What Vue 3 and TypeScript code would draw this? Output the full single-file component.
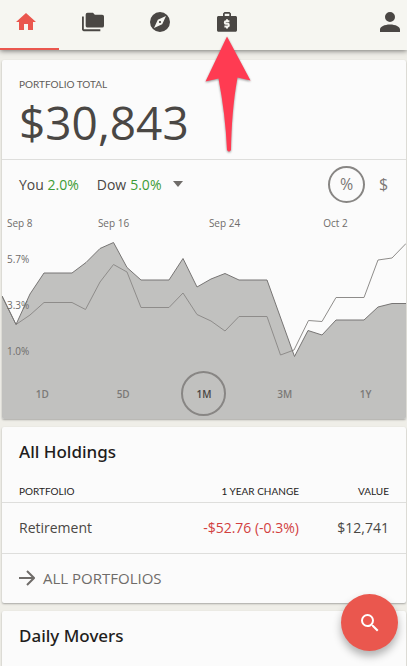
<script setup lang="ts">
import { computed, ref } from 'vue'

type Point = [number, number]

const unit = ref<'percent' | 'dollar'>('percent')
const periods = ['1D', '5D', '1M', '3M', '1Y']
const period = ref('1M')
const dates = ['Sep 8', 'Sep 16', 'Sep 24', 'Oct 2']
const levels = ['5.7%', '3.3%', '1.0%']

const holdings = [{ name: 'Retirement', change: '-$52.76 (-0.3%)', value: '$12,741' }]

const mine: Point[] = [
  [0, 88], [14, 116.5], [28, 86], [42, 65], [70, 65], [84, 54.5], [98, 40.5], [111.5, 34.5],
  [125, 59.5], [139, 72], [167, 72], [181, 50.5], [195, 79], [209, 71], [223, 65.5], [237, 72],
  [265, 72], [292.5, 148.5], [306, 122.5], [320, 127], [334, 112], [362, 112], [376, 99],
  [390, 95.5], [404, 95.5],
]
const dow: Point[] = [
  [0, 88], [14, 116.5], [28, 107], [42, 94.5], [70, 94.5], [83.5, 101.5], [98, 74], [111.5, 56.5],
  [125, 64], [139, 99.5], [167, 99.5], [181, 85], [195, 106.5], [209, 113], [223, 123], [237, 108.5],
  [265, 108.5], [278.5, 147], [292, 142], [306.5, 112.5], [320, 113.5], [334, 89.5], [362, 89.5],
  [376, 52], [390, 50], [404, 35.5],
]

const toPath = (points: Point[]) => 'M' + points.map(([x, y]) => `${x} ${y}`).join('L')
const minePath = computed(() => toPath(mine))
const dowPath = computed(() => toPath(dow))
const areaPath = computed(() => `${minePath.value}V211H0Z`)
</script>

<template>
  <div class="page">
    <header class="bar">
      <nav class="tabs" aria-label="Main">
        <a class="tab active" href="#home" aria-label="Home">
          <svg width="24" height="24" viewBox="0 0 24 24"><path d="M10 20v-6h4v6h5v-8h3L12 3 2 12h3v8z" /></svg>
        </a>
        <a class="tab" href="#portfolios" aria-label="Portfolios">
          <svg width="22" height="22" viewBox="0 0 24 24"><path d="M22 4h-8l-2-2H6a2 2 0 0 0-2 2v12c0 1.100.9 2 2 2h16a2 2 0 0 0 2-2V6a2 2 0 0 0-2-2M2 6H0v14c0 1.100.9 2 2 2h18v-2H2z" /></svg>
        </a>
        <a class="tab" href="#explore" aria-label="Explore">
          <svg width="24" height="24" viewBox="0 0 24 24"><path d="M12 10.900c-.61 0-1.100.49-1.100 1.100s.49 1.100 1.100 1.100 1.100-.49 1.100-1.100-.49-1.100-1.100-1.100zM12 2a10 10 0 1 0 0 20 10 10 0 0 0 0-20zm2.190 12.190L6 18l3.810-8.190L18 6z" /></svg>
        </a>
        <a class="tab" href="#funds" aria-label="Funds">
          <svg width="24" height="24" viewBox="0 0 24 24">
            <path fill-rule="evenodd" d="M8 6V3.500L9.500 2h5L16 3.500V6h4.500c.8 0 1.500.7 1.500 1.500v12.800c0 .8-.7 1.500-1.500 1.500h-17c-.8 0-1.500-.7-1.500-1.500V7.500C2 6.700 2.700 6 3.500 6zm1.700 0h4.600V3.700H9.700z" />
            <path class="mark" d="M14.400 11.300H10.800c-1.300 0-1.300 2.500 0 2.500h1.900c1.500 0 1.500 2.700 0 2.700H9.400M12 9.300v2M12 16.500v2" />
          </svg>
        </a>
      </nav>
      <a class="account" href="#account" aria-label="Account">
        <svg width="30" height="30" viewBox="0 0 24 24"><path d="M12 4a4 4 0 1 1 0 8 4 4 0 0 1 0-8m0 10c4.420 0 8 1.790 8 4v2H4v-2c0-2.210 3.580-4 8-4z" /></svg>
      </a>
    </header>

    <svg class="pointer" width="52" height="122" viewBox="0 0 52 122" aria-hidden="true">
      <path d="M25 2.500L48.500 46.500 35.500 43.500C31 68 29.500 92 29 116Q27 119 25 116C24 92 21 68 16.500 44.500L3.500 47.500Z" />
    </svg>

    <main class="cards">
      <section class="card">
        <div class="total">
          <h2 class="caption">PORTFOLIO TOTAL</h2>
          <p class="amount">$30,843</p>
        </div>
        <div class="compare">
          <span>You <b>2.0%</b></span>
          <button class="versus" type="button">
            Dow <b>5.0%</b>
            <svg width="10" height="6" viewBox="0 0 10 6"><path d="M0 0h10L5 6z" /></svg>
          </button>
          <div class="units">
            <button type="button" :class="['unit', { on: unit === 'percent' }]" @click="unit = 'percent'">%</button>
            <button type="button" :class="['unit', { on: unit === 'dollar' }]" @click="unit = 'dollar'">$</button>
          </div>
        </div>
        <div class="chart">
          <svg class="plot" viewBox="0 0 404 211" preserveAspectRatio="none" aria-hidden="true">
            <path class="area" :d="areaPath" />
            <path class="line dow" :d="dowPath" />
            <path class="line" :d="minePath" />
          </svg>
          <div class="dates"><span v-for="d in dates" :key="d">{{ d }}</span></div>
          <div class="levels"><span v-for="l in levels" :key="l">{{ l }}</span></div>
          <div class="periods">
            <button
              v-for="p in periods"
              :key="p"
              type="button"
              :class="['period', { on: p === period }]"
              @click="period = p"
            >{{ p }}</button>
          </div>
        </div>
      </section>

      <section class="card">
        <h2 class="title">All Holdings</h2>
        <table>
          <thead>
            <tr><th>PORTFOLIO</th><th>1 YEAR CHANGE</th><th>VALUE</th></tr>
          </thead>
          <tbody>
            <tr v-for="h in holdings" :key="h.name">
              <td>{{ h.name }}</td><td class="loss">{{ h.change }}</td><td>{{ h.value }}</td>
            </tr>
          </tbody>
        </table>
        <a class="more" href="#all">
          <svg width="16" height="16" viewBox="0 0 16 16"><path d="M0 8h15M8 1l7 7-7 7" /></svg>
          ALL PORTFOLIOS
        </a>
      </section>

      <section class="card last">
        <h2 class="title">Daily Movers</h2>
      </section>
    </main>

    <button class="search" type="button" aria-label="Search">
      <svg width="24" height="24" viewBox="0 0 24 24"><path d="M15.500 14h-.79l-.28-.27A6.470 6.470 0 0 0 16 9.500 6.500 6.500 0 1 0 9.500 16c1.610 0 3.090-.59 4.230-1.570l.27.28v.79l5 4.990L20.490 19zm-6 0a4.500 4.500 0 1 1 0-9 4.500 4.500 0 0 1 0 9z" /></svg>
    </button>
  </div>
</template>

<style>
body {
  background: #efeee8;
}
</style>

<style scoped>
.page {
  position: relative;
  display: flex;
  flex-direction: column;
  min-height: 100vh;
  font-family: "Open Sans", "Noto Sans", sans-serif;
  color: #4a4744;
}
.page * {
  box-sizing: border-box;
}
h2, p {
  margin: 0;
  font-weight: 400;
}
button {
  padding: 0;
  border: 0;
  background: none;
  font: inherit;
  color: inherit;
  cursor: pointer;
}
a {
  color: inherit;
  text-decoration: none;
}
svg {
  display: block;
  flex: none;
  fill: currentColor;
}
.bar {
  display: flex;
  justify-content: space-between;
  height: 50px;
  background: #f6f6f1;
  box-shadow: 0 1px 5px rgba(0, 0, 0, 0.5);
}
.tabs {
  display: flex;
  margin-left: -8px;
}
.tab {
  display: flex;
  align-items: center;
  justify-content: center;
  width: 67px;
  padding-bottom: 4px;
  border-bottom: 2px solid transparent;
}
.tab.active {
  color: #ea574e;
  border-color: #ea574e;
}
.mark {
  fill: none;
  stroke: #f6f6f1;
  stroke-width: 2;
}
.account {
  display: flex;
  align-items: center;
  padding: 0 2px 6px 0;
}
.pointer {
  position: absolute;
  top: 34px;
  left: 202px;
  fill: #ff3b52;
  filter: drop-shadow(0 1px 1px rgba(0, 0, 0, 0.4));
}
.cards {
  display: flex;
  flex: 1;
  flex-direction: column;
  gap: 8px;
  padding: 10px 1px 0 2px;
}
.card {
  border-radius: 2px;
  background: #fbfbfb;
  box-shadow: 0 1px 2px rgba(0, 0, 0, 0.3);
  overflow: hidden;
}
.last {
  flex: 1;
  border-radius: 2px 2px 0 0;
}
.total {
  height: 100px;
  padding: 16px 17px 0;
  border-bottom: 1px solid #dededc;
}
.caption {
  font-family: Lato, sans-serif;
  font-size: 10px;
  line-height: 16px;
  color: #5f5c59;
}
.amount {
  font-size: 46px;
  line-height: 60px;
}
.compare {
  display: flex;
  align-items: center;
  gap: 18px;
  height: 48px;
  padding: 0 4px 0 17px;
  font-size: 14px;
}
.compare b {
  font-weight: 400;
  color: #3d9b35;
}
.versus {
  display: flex;
  align-items: center;
  gap: 4px;
}
.versus svg {
  margin-left: 8px;
  color: #6f6c69;
}
.units {
  display: flex;
  margin-left: auto;
  font-size: 16px;
  color: #7b7876;
}
.unit {
  width: 37px;
  height: 37px;
  border: 2px solid transparent;
  border-radius: 50%;
}
.unit.on {
  border-color: #888684;
}
.chart {
  position: relative;
  padding: 7px 0 3px;
}
.plot {
  position: absolute;
  top: 0;
  left: 0;
  width: 100%;
  height: 100%;
}
.area {
  fill: #c1c1bf;
}
.line {
  fill: none;
  stroke: #777574;
  stroke-width: 1;
}
.line.dow {
  stroke: #8e8c8a;
}
.dates, .levels, .periods {
  position: relative;
  color: #6f6c6a;
  font-size: 10px;
  line-height: 16px;
}
.dates {
  display: grid;
  grid-template-columns: 56fr 111fr 111fr 111fr 15fr;
  text-align: center;
}
.dates span:first-child {
  padding-left: 5px;
  text-align: left;
}
.levels {
  display: flex;
  flex-direction: column;
  gap: 30px;
  padding: 20px 0 12px 5px;
}
.periods {
  display: grid;
  grid-template-columns: repeat(5, 1fr);
  justify-items: center;
  color: #7b7977;
  font-weight: 600;
}
.period {
  width: 45px;
  height: 45px;
  border: 2px solid transparent;
  border-radius: 50%;
}
.period.on {
  border-color: #888684;
  color: #4a4744;
}
.title {
  padding: 0 17px;
  font-family: "Noto Sans", sans-serif;
  font-size: 17px;
  font-weight: 500;
  line-height: 50px;
  color: #1f1d1c;
}
table {
  width: 100%;
  border-collapse: collapse;
}
th, td {
  padding: 0 8px;
  border-bottom: 1px solid #dededc;
  text-align: right;
  font-weight: 400;
}
th:first-child, td:first-child {
  padding-left: 17px;
  text-align: left;
}
th:last-child, td:last-child {
  width: 99px;
  padding-right: 17px;
}
th {
  height: 25px;
  padding-top: 4px;
  font-family: Lato, sans-serif;
  font-size: 10px;
  color: #1f1d1c;
}
td {
  height: 51px;
  font-size: 14px;
}
.loss {
  color: #d23f3f;
}
.more {
  display: flex;
  align-items: center;
  gap: 8px;
  height: 49px;
  padding: 0 17px;
  font-size: 15px;
  color: #6f6c69;
}
.more svg {
  fill: none;
  stroke: currentColor;
  stroke-width: 2;
}
.search {
  position: fixed;
  right: 9px;
  bottom: 15px;
  display: flex;
  align-items: center;
  justify-content: center;
  width: 57px;
  height: 57px;
  border-radius: 50%;
  background: #ea574e;
  box-shadow: 0 5px 9px rgba(0, 0, 0, 0.3);
  color: #fff;
}
</style>
